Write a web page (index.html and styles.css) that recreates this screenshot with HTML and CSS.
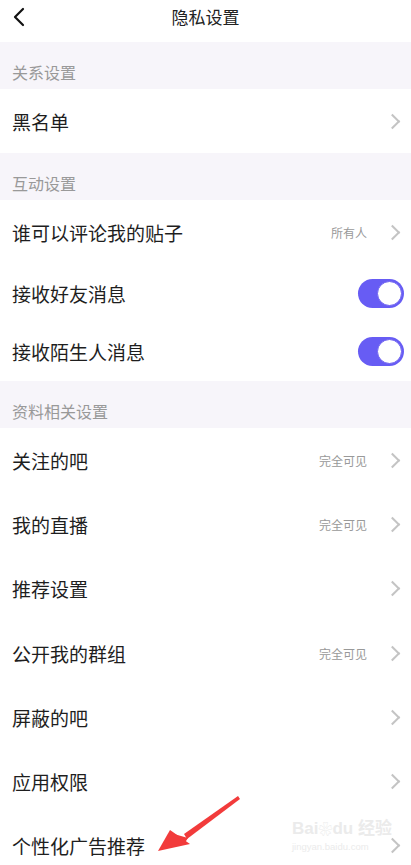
FILE: index.html
```html
<!DOCTYPE html>
<html lang="zh-CN">
<head>
  <meta charset="UTF-8">
  <title>隐私设置</title>
  <link rel="stylesheet" href="styles.css">
</head>
<body>

  <div class="topbar">
    <span class="back">
      <svg width="14" height="20" viewBox="0 0 14 20"><path d="M11 2 L3 10 L11 18" fill="none" stroke="#111" stroke-width="2.2" stroke-linecap="round" stroke-linejoin="round"/></svg>
    </span>
    <div class="title">隐私设置</div>
    <span></span>
  </div>

  <div class="section">关系设置</div>
  <div class="row">
    <span class="label">黑名单</span>
    <span class="arrow"></span>
  </div>

  <div class="section">互动设置</div>
  <div class="row">
    <span class="label">谁可以评论我的贴子</span>
    <span class="value">所有人</span>
    <span class="arrow"></span>
  </div>
  <div class="row short">
    <span class="label">接收好友消息</span>
    <span class="switch on"></span>
  </div>
  <div class="row short">
    <span class="label">接收陌生人消息</span>
    <span class="switch on"></span>
  </div>

  <div class="section">资料相关设置</div>
  <div class="row">
    <span class="label">关注的吧</span>
    <span class="value">完全可见</span>
    <span class="arrow"></span>
  </div>
  <div class="row">
    <span class="label">我的直播</span>
    <span class="value">完全可见</span>
    <span class="arrow"></span>
  </div>
  <div class="row">
    <span class="label">推荐设置</span>
    <span class="arrow"></span>
  </div>
  <div class="row">
    <span class="label">公开我的群组</span>
    <span class="value">完全可见</span>
    <span class="arrow"></span>
  </div>
  <div class="row">
    <span class="label">屏蔽的吧</span>
    <span class="arrow"></span>
  </div>
  <div class="row">
    <span class="label">应用权限</span>
    <span class="arrow"></span>
  </div>
  <div class="row">
    <span class="label">个性化广告推荐</span>
    <span class="arrow"></span>
  </div>

  <!-- annotation overlay -->
  <svg class="pointer" width="90" height="60" viewBox="0 0 90 60">
    <path d="M84 2 L30 40 L33 45 L86 5 Z" fill="#f23b3b"/>
    <path d="M4 57 L16 36 L36 50 Z" fill="#f23b3b"/>
    <path d="M20 40 L34 44 L30 50 Z" fill="#f23b3b"/>
  </svg>
  <div class="watermark">
    <div class="wm-top">Bai<span class="paw">❀</span>du 经验</div>
    <div class="wm-url">jingyan.baidu.com</div>
  </div>

</body>
</html>
```

FILE: styles.css
```css
body {
  margin: 0;
  width: 411px;
  height: 865px;
  overflow: hidden;
  position: relative;
  background: #fff;
  font-family: "Noto Sans CJK SC", "Noto Sans", sans-serif;
  color: #222;
}

.topbar {
  height: 42px;
  display: grid;
  grid-template-columns: 40px 1fr 40px;
  align-items: center;
}

.back {
  display: flex;
  padding-left: 12px;
  padding-bottom: 9px;
}

.title {
  text-align: center;
  font-size: 17px;
  padding-bottom: 9px;
  color: #222;
}

.section {
  height: 47px;
  box-sizing: border-box;
  padding: 19px 12px 0;
  background: #f7f5fa;
  color: #999;
  font-size: 16px;
  line-height: 22px;
}

.row {
  height: 64px;
  display: flex;
  align-items: center;
  padding: 0 11px 0 12px;
  margin-bottom: 0.3px;
}

.row.short {
  height: 58px;
  padding-right: 7px;
}

.label {
  flex: 1;
  font-size: 19px;
  color: #1e1e1e;
}

.value {
  font-size: 12px;
  color: #999;
  margin-right: 20px;
}

.arrow {
  width: 9px;
  height: 9px;
  border-top: 2px solid #c4c4c4;
  border-right: 2px solid #c4c4c4;
  transform: rotate(45deg);
  margin-right: 2px;
}

.switch {
  width: 46px;
  height: 29px;
  border-radius: 15px;
  background: #d8d8d8;
  position: relative;
}

.switch::after {
  content: "";
  position: absolute;
  top: 2px;
  right: 2px;
  width: 23px;
  height: 23px;
  border-radius: 50%;
  background: #fff;
  border: 1px solid #6f63f0;
}

.switch.on {
  background: #675cf4;
}

.pointer {
  position: absolute;
  left: 154px;
  top: 794px;
}

.watermark {
  position: absolute;
  left: 292px;
  top: 820px;
  width: 95px;
  color: #ebebeb;
  font-family: "Liberation Sans", "Noto Sans CJK SC", sans-serif;
  line-height: 1;
  white-space: nowrap;
}

.wm-top {
  font-size: 17px;
  font-weight: bold;
}

.paw {
  font-size: 14px;
}

.wm-url {
  font-size: 9.5px;
  margin-top: 5px;
}
```
